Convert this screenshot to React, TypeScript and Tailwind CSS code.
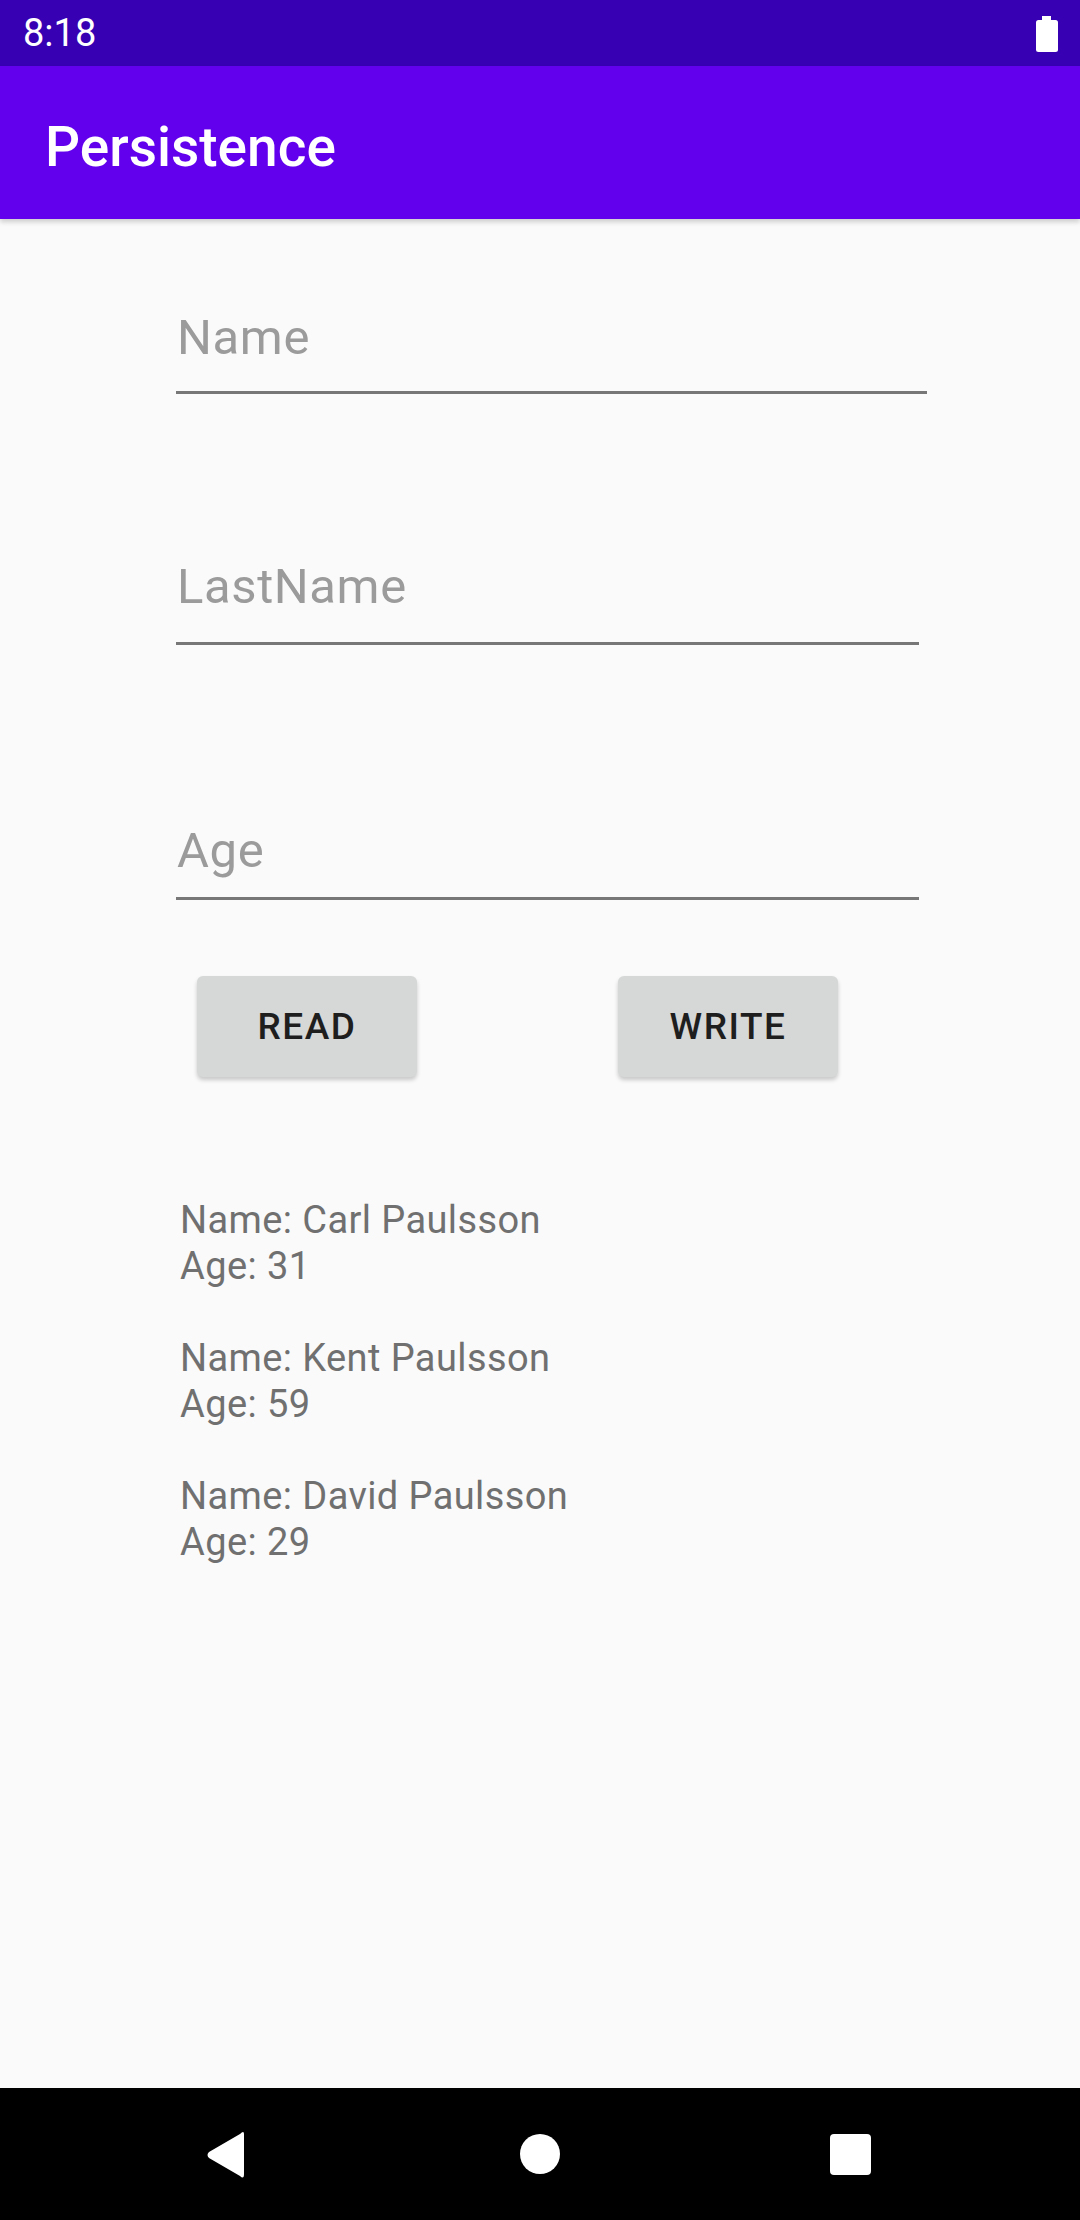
const people = [
  { name: "Carl Paulsson", age: 31 },
  { name: "Kent Paulsson", age: 59 },
  { name: "David Paulsson", age: 29 },
];

function StatusBar() {
  return (
    <div className="h-[66px] bg-[#3700b3] flex items-center justify-between pl-[23px] pr-[22px] text-white">
      <span className="text-[38px] leading-none">8:18</span>
      <svg width="22" height="36" viewBox="0 0 22 36" className="mt-[1px]">
        <rect x="6" y="0" width="9" height="5" fill="white" />
        <rect x="0" y="4" width="22" height="32" rx="2.5" fill="white" />
      </svg>
    </div>
  );
}

function AppBar() {
  return (
    <div className="h-[153px] bg-[#6200ee] flex items-center pl-[45px] shadow-[0_3px_5px_rgba(0,0,0,0.18)] relative z-10">
      <h1 className="text-white text-[55px] font-medium leading-none mt-[10px]">Persistence</h1>
    </div>
  );
}

function Field({ hint, mt, lineGap, width }: { hint: string; mt: string; lineGap: string; width: string }) {
  return (
    <div className={`${mt} ml-[176px] ${width}`}>
      <div className="text-[49px] leading-[56px] tracking-[0.6px] text-[#9b9b9b] pl-[1px]">{hint}</div>
      <div className={`${lineGap} h-[3px] bg-[#777777]`}></div>
    </div>
  );
}

function Button({ label }: { label: string }) {
  return (
    <button className="w-[220px] h-[101px] rounded-[6px] bg-[#d6d7d7] shadow-[0_3px_4px_rgba(0,0,0,0.2)] text-[37px] font-medium text-[#1e1e1e] tracking-[1.5px] uppercase">
      {label}
    </button>
  );
}

function NavBar() {
  return (
    <div className="h-[132px] bg-black">
      <svg width="1080" height="132" viewBox="0 0 1080 132">
        <path
          d="M244 46 L244 86 Q244 92 240 88 L209 70 Q206 67 209 64 L240 46 Q244 42 244 46 Z"
          fill="white"
        />
        <circle cx="540" cy="66" r="20" fill="white" />
        <rect x="830" y="46" width="41" height="41" rx="4" fill="white" />
      </svg>
    </div>
  );
}

export default function App() {
  return (
    <div className="w-[1080px] h-[2220px] flex flex-col bg-[#fafafa] font-['Roboto',sans-serif]">
      <StatusBar />
      <AppBar />
      <div className="flex-1 flex flex-col">
        <Field hint="Name" mt="mt-[91px]" lineGap="mt-[25px]" width="w-[751px]" />
        <Field hint="LastName" mt="mt-[165px]" lineGap="mt-[27px]" width="w-[743px]" />
        <Field hint="Age" mt="mt-[178px]" lineGap="mt-[18px]" width="w-[743px]" />
        <div className="mt-[76px] flex pl-[197px] gap-[201px]">
          <Button label="Read" />
          <Button label="Write" />
        </div>
        <div className="mt-[120px] ml-[180px] text-[38px] leading-[46px] tracking-[0.4px] text-[#707070]">
          {people.map((p, i) => (
            <div key={p.name} className={i > 0 ? "mt-[46px]" : ""}>
              <div>Name: {p.name}</div>
              <div>Age: {p.age}</div>
            </div>
          ))}
        </div>
      </div>
      <NavBar />
    </div>
  );
}
